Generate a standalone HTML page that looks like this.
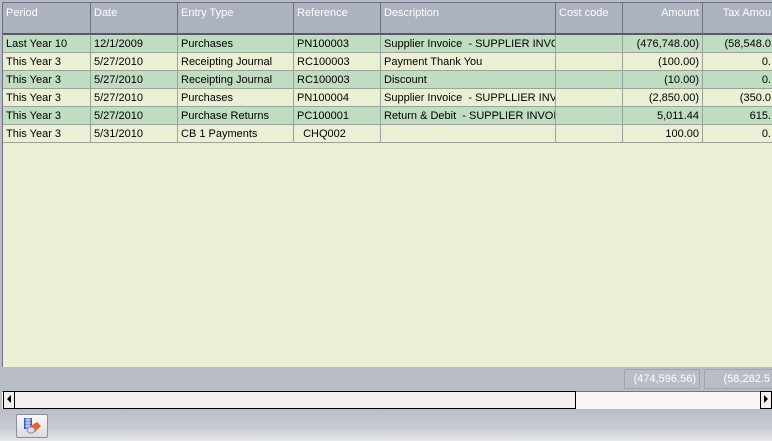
<!DOCTYPE html>
<html><head><style>
body{margin:0;width:772px;height:441px;overflow:hidden;background:#b9bdc7;font-family:"Liberation Sans",sans-serif;font-size:11px;position:relative}
.grid{position:absolute;left:2px;top:2px;width:770px;height:364px;background:#ebefd4;border-left:1px solid #6c7080;border-top:1px solid #6c7080;overflow:hidden}
.hd{position:absolute;top:0;height:32px;background:#adb2c1;color:#fff;border-right:1px solid #6c7080;border-bottom:2px solid #555a66;box-sizing:border-box;padding:4px 3px;white-space:nowrap;overflow:hidden}
.c{position:absolute;height:18px;box-sizing:border-box;border-right:1px solid #9aa39a;border-bottom:1px solid #9aa39a;padding:3px 3px 0;white-space:pre;overflow:hidden;color:#000}
.r{text-align:right}
.tot{position:absolute;top:369px;height:20px;border:1px solid #a0a4ad;box-sizing:border-box;color:#fff;text-align:right;padding:3px 3px 0;overflow:hidden;white-space:nowrap}
</style></head><body>
<div class="grid" id="g"></div>
<div class="tot" style="left:624px;width:76px">(474,596.56)</div>
<div class="tot" style="left:704px;width:70px">(58,282.5</div>
<div style="position:absolute;left:2px;top:391px;width:770px;height:17px;background:#f7f7f7;border-top:1px solid #777"></div>
<div style="position:absolute;left:3px;top:391px;width:10px;height:16px;border:1px solid #000;background:#f0f0f0"></div>
<div style="position:absolute;left:7px;top:395px;width:0;height:0;border-top:4px solid transparent;border-bottom:4px solid transparent;border-right:4px solid #000"></div>
<div style="position:absolute;left:14px;top:391px;width:560px;height:16px;border:1px solid #000;background:#f0f0f0"></div>
<div style="position:absolute;left:760px;top:391px;width:10px;height:16px;border:1px solid #000;background:#f0f0f0"></div>
<div style="position:absolute;left:764px;top:395px;width:0;height:0;border-top:4px solid transparent;border-bottom:4px solid transparent;border-left:4px solid #000"></div>
<div style="position:absolute;left:0;top:409px;width:772px;height:32px;background:linear-gradient(#b9bdc7,#c7cad2 60%,#e6e8ec)"></div>
<div style="position:absolute;left:16px;top:414px;width:30px;height:22px;border:1px solid #8a8e98;border-radius:2px;background:linear-gradient(#f8f8f8,#dcdde2)">
<svg width="30" height="22" viewBox="0 0 30 22"><rect x="7" y="3" width="8" height="11" fill="#3b5fc0"/><path d="M8 5h6M8 8h6M8 11h6M10 3v11M12 3v11" stroke="#fff" stroke-width="0.8"/><path d="M12 12l8-5 4 4-6 6z" fill="#e9622a"/><ellipse cx="14" cy="15" rx="4" ry="3" fill="#dde" stroke="#889"/></svg></div>
<script>
var cols=[[0,88,"Period"],[88,87,"Date"],[175,116,"Entry Type"],[291,87,"Reference"],[378,175,"Description"],[553,67,"Cost code"],[620,80,"Amount",1],[700,72,"Tax Amou",1]];
var rows=[["Last Year 10","12/1/2009","Purchases","PN100003","Supplier Invoice  - SUPPLIER INVO","","(476,748.00)","(58,548.0"],
["This Year 3","5/27/2010","Receipting Journal","RC100003","Payment Thank You","","(100.00)","0."],
["This Year 3","5/27/2010","Receipting Journal","RC100003","Discount","","(10.00)","0."],
["This Year 3","5/27/2010","Purchases","PN100004","Supplier Invoice  - SUPPLLIER INVI","","(2,850.00)","(350.0"],
["This Year 3","5/27/2010","Purchase Returns","PC100001","Return &amp; Debit  - SUPPLIER INVOI(","","5,011.44","615."],
["This Year 3","5/31/2010","CB 1 Payments","  CHQ002","","","100.00","0."]];
var h="";
cols.forEach(function(c){h+='<div class="hd'+(c[3]?' r':'')+'" style="left:'+c[0]+'px;width:'+c[1]+'px">'+c[2]+'</div>';});
rows.forEach(function(r,i){var bg=i%2?"#ebefd4":"#c0dcc1";r.forEach(function(t,j){var c=cols[j];h+='<div class="c'+(c[3]?' r':'')+'" style="left:'+c[0]+'px;width:'+c[1]+'px;top:'+(32+i*18)+'px;background:'+bg+'">'+t+'</div>';});});
document.getElementById("g").innerHTML=h;
</script>
</body></html>
